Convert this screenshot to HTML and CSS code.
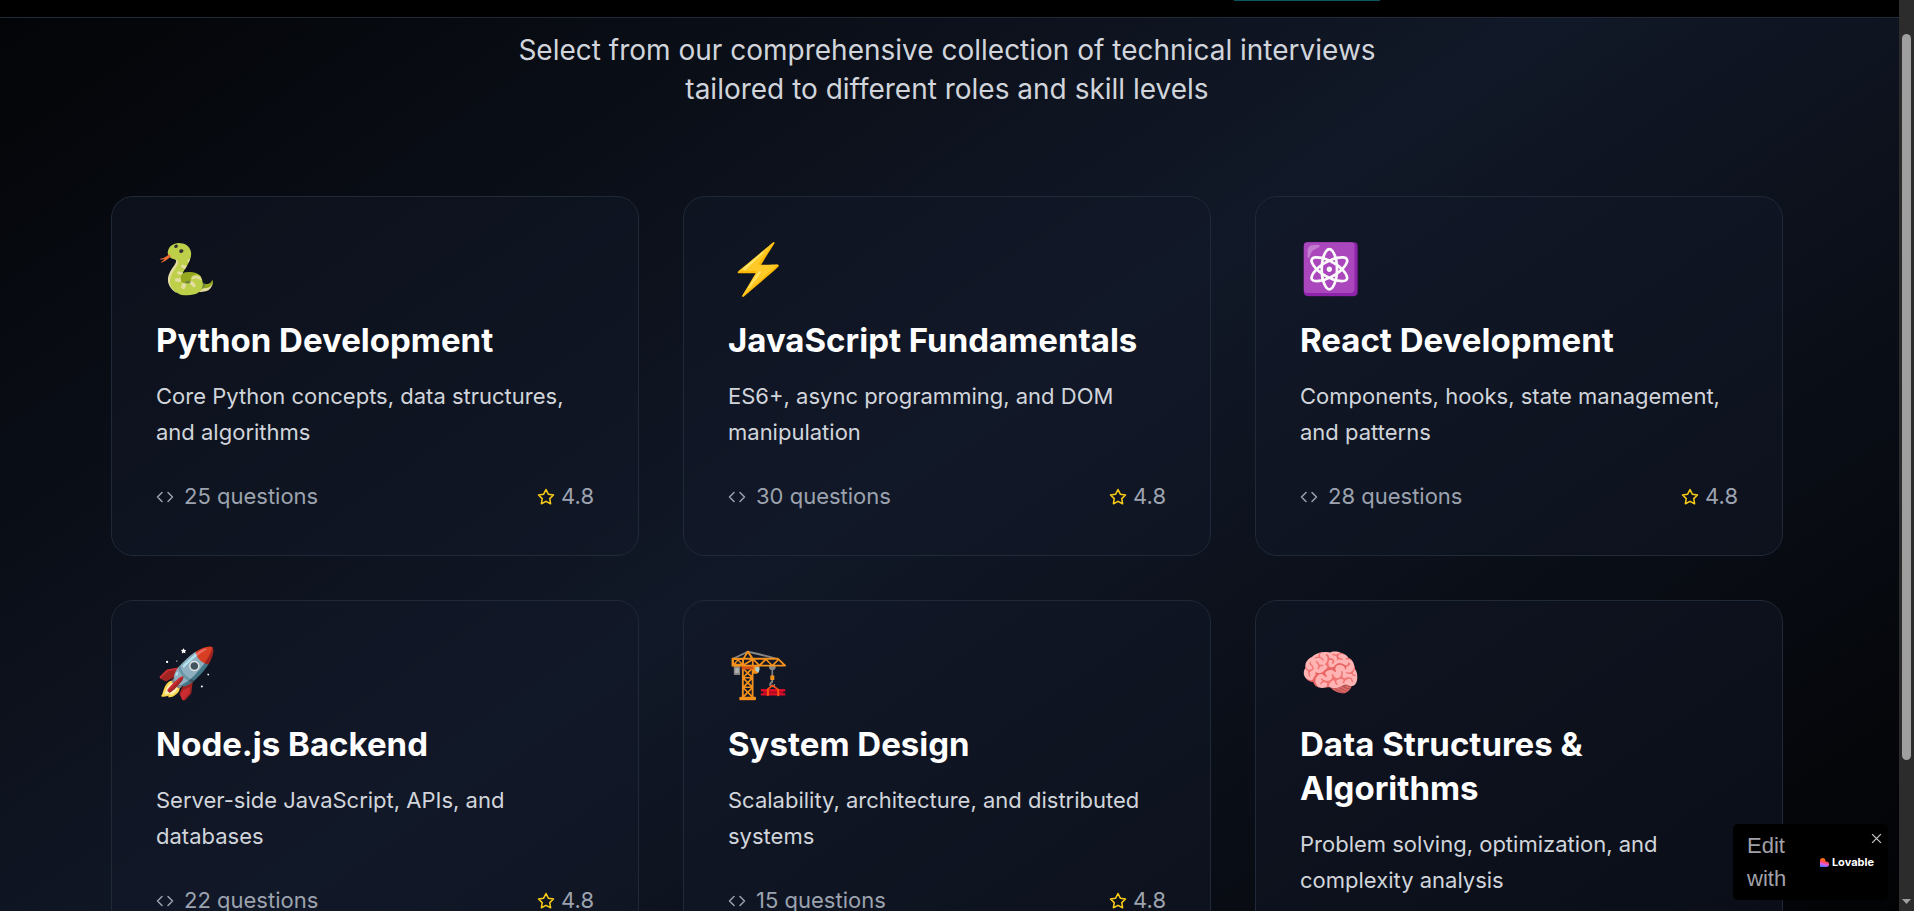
FILE: index.html
```
<!DOCTYPE html>
<html lang="en">
<head>
<meta charset="utf-8">
<meta name="viewport" content="width=device-width, initial-scale=1">
<title>Technical Interviews</title>
<link rel="stylesheet" href="styles.css">
</head>
<body>
<svg class="sprite" aria-hidden="true">
  <symbol id="code" viewBox="0 0 24 24"><path d="m16 18 6-6-6-6M8 6l-6 6 6 6"/></symbol>
  <symbol id="star" viewBox="0 0 24 24"><path d="m12 2 3.09 6.26L22 9.27l-5 4.87 1.18 6.88L12 17.77l-6.18 3.25L7 14.14 2 9.27l6.91-1.01L12 2z"/></symbol>
</svg>
<div class="window">
  <div class="page">
    <header class="topbar"><span class="topbar-edge"></span></header>
    <main class="content">
      <p class="intro">Select from our comprehensive collection of technical interviews tailored to different roles and skill levels</p>
      <div class="grid">
        <article class="card">
          <div class="emoji">🐍</div>
          <h3 class="title">Python Development</h3>
          <p class="desc">Core Python concepts, data structures, and algorithms</p>
          <div class="meta"><span class="count"><svg class="icon"><use href="#code"/></svg>25 questions</span><span class="rating"><svg class="icon star"><use href="#star"/></svg>4.8</span></div>
        </article>
        <article class="card">
          <div class="emoji">⚡</div>
          <h3 class="title">JavaScript Fundamentals</h3>
          <p class="desc">ES6+, async programming, and DOM manipulation</p>
          <div class="meta"><span class="count"><svg class="icon"><use href="#code"/></svg>30 questions</span><span class="rating"><svg class="icon star"><use href="#star"/></svg>4.8</span></div>
        </article>
        <article class="card">
          <div class="emoji">⚛️</div>
          <h3 class="title">React Development</h3>
          <p class="desc">Components, hooks, state management, and patterns</p>
          <div class="meta"><span class="count"><svg class="icon"><use href="#code"/></svg>28 questions</span><span class="rating"><svg class="icon star"><use href="#star"/></svg>4.8</span></div>
        </article>
        <article class="card">
          <div class="emoji">🚀</div>
          <h3 class="title">Node.js Backend</h3>
          <p class="desc">Server-side JavaScript, APIs, and databases</p>
          <div class="meta"><span class="count"><svg class="icon"><use href="#code"/></svg>22 questions</span><span class="rating"><svg class="icon star"><use href="#star"/></svg>4.8</span></div>
        </article>
        <article class="card">
          <div class="emoji">🏗️</div>
          <h3 class="title">System Design</h3>
          <p class="desc">Scalability, architecture, and distributed systems</p>
          <div class="meta"><span class="count"><svg class="icon"><use href="#code"/></svg>15 questions</span><span class="rating"><svg class="icon star"><use href="#star"/></svg>4.8</span></div>
        </article>
        <article class="card">
          <div class="emoji">🧠</div>
          <h3 class="title">Data Structures &amp; Algorithms</h3>
          <p class="desc">Problem solving, optimization, and complexity analysis</p>
        </article>
      </div>
    </main>
  </div>
  <div class="scrollbar" aria-hidden="true">
    <div class="thumb"></div>
    <svg class="arrow" viewBox="0 0 9 5"><path d="M0 0h9L4.500 5z"/></svg>
  </div>
  <aside class="badge">
    <a class="badge-link" href="#">
      <span class="badge-text">Edit with</span>
      <span class="brand">
        <svg class="brand-mark" viewBox="0 0 10 10">
          <defs><linearGradient id="heart" x1="0.700" y1="0" x2="0.450" y2="1"><stop offset="0.250" stop-color="#ff6a13"/><stop offset="0.500" stop-color="#ff4668"/><stop offset="0.720" stop-color="#e05fe0"/><stop offset="1" stop-color="#4f74ff"/></linearGradient></defs>
          <path fill="url(#heart)" d="M0 3a3 3 0 0 1 6 0v.9h1a3.050 3.050 0 0 1 0 6.100H0z"/>
        </svg>
        <span class="brand-name">Lovable</span>
      </span>
    </a>
    <button class="close" type="button" aria-label="Close"><svg viewBox="0 0 10 10"><path d="M1 1l8 8M9 1L1 9"/></svg></button>
  </aside>
</div>
</body>
</html>
```
FILE: styles.css
```
* { box-sizing: border-box; }
body {
  margin: 0;
  background: #000;
  color: #fff;
  font-family: Inter, "Liberation Sans", sans-serif;
  font-size: 22px;
}
.sprite { display: none; }
.window {
  position: relative;
  display: flex;
  height: 100vh;
  overflow: hidden;
}
.page {
  flex: 1;
  height: max-content;
  min-height: 100vh;
  background: linear-gradient(to bottom right, #000, #111827, #000) 0 -220px / 100% 1300px no-repeat;
}
.topbar {
  height: 18px;
  background: #000;
  border-bottom: 1px solid #1f2937;
}
.topbar-edge {
  display: block;
  width: 146px;
  height: 1px;
  margin-left: 65%;
  background: #0b5560;
}
.content {
  max-width: 1765px;
  margin: 0 auto;
  padding: 13px 49px 44px 44px;
}
.intro {
  max-width: 924px;
  margin: 0 auto 87px;
  color: #d1d5db;
  font-size: 28px;
  line-height: 39px;
  text-align: center;
}
.grid {
  display: grid;
  grid-template-columns: repeat(3, 1fr);
  gap: 44px;
}
.card {
  padding: 44px 44px 42px;
  border: 1px solid #1f2937;
  border-radius: 22px;
  background: rgba(17, 24, 39, 0.5);
}
.emoji {
  height: 57px;
  margin-bottom: 20px;
  font-family: "Noto Color Emoji", Inter, sans-serif;
  font-size: 49px;
  line-height: 57px;
}
.title {
  margin: 0 0 16px;
  font-size: 33px;
  font-weight: 700;
  line-height: 44px;
}
.desc {
  margin: 0 0 30px;
  color: #d1d5db;
  line-height: 36px;
}
.meta {
  display: flex;
  justify-content: space-between;
  color: #9ca3af;
  line-height: 33px;
}
.count, .rating {
  display: flex;
  align-items: center;
  gap: 10px;
}
.rating { gap: 6px; }
.icon {
  width: 18px;
  height: 18px;
  fill: none;
  stroke: currentColor;
  stroke-width: 2;
  stroke-linecap: round;
  stroke-linejoin: round;
}
.star { color: #facc15; }
.scrollbar {
  display: flex;
  flex-direction: column;
  align-items: center;
  justify-content: space-between;
  width: 15px;
  padding: 34px 0 7px;
  background: #2c2c2c;
}
.thumb {
  width: 9px;
  height: 83.500%;
  border-radius: 5px;
  background: #9f9f9f;
}
.arrow {
  width: 9px;
  height: 5px;
  fill: #9f9f9f;
}
.badge {
  position: absolute;
  right: 26px;
  bottom: 11px;
  width: 155px;
  padding: 5px 14px;
  border-radius: 5px;
  background: #000;
}
.badge-link {
  display: flex;
  align-items: center;
  justify-content: space-between;
  color: #a1a1aa;
  text-decoration: none;
}
.badge-text {
  width: 44px;
  font-family: "Liberation Sans", Arial, sans-serif;
  line-height: 33px;
}
.brand {
  display: flex;
  align-items: center;
  gap: 3px;
}
.brand-mark {
  width: 9px;
  height: 9px;
}
.brand-name {
  color: #fff;
  font-size: 11px;
  font-weight: 700;
  line-height: 16px;
}
.close {
  position: absolute;
  top: 9px;
  right: 6px;
  padding: 0;
  border: 0;
  background: none;
  line-height: 0;
}
.close svg {
  width: 11px;
  height: 11px;
  fill: none;
  stroke: #c4c4c8;
  stroke-width: 1.200;
}
```
